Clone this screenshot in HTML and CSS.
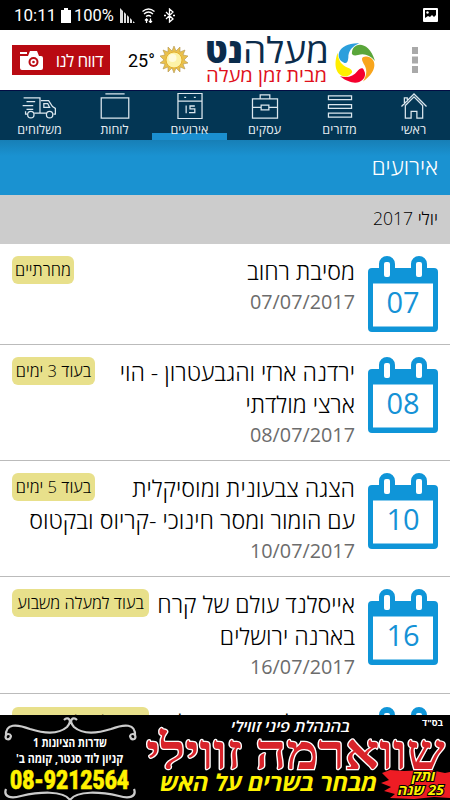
FILE: index.html
```html
<!DOCTYPE html>
<html lang="he" dir="rtl">
<head>
  <meta charset="UTF-8">
  <meta name="viewport" content="width=device-width, initial-scale=1.0">
  <title>מעלה נט</title>
  <link rel="stylesheet" href="styles.css">
</head>
<body>

  <svg class="defs" width="0" height="0">
    <symbol id="calendar" viewBox="0 0 70 76">
      <path d="M4 12h7V8a8 8 0 0 1 16 0v4h16V8a8 8 0 0 1 16 0v4h7a4 4 0 0 1 4 4v56a4 4 0 0 1-4 4H4a4 4 0 0 1-4-4V16a4 4 0 0 1 4-4z" fill="#0f95d8"/>
      <path d="M5 27.500h60v43H5z" fill="#fff"/>
      <rect x="16" y="6" width="6" height="15" rx="2" fill="#fff"/>
      <rect x="48" y="6" width="6" height="15" rx="2" fill="#fff"/>
    </symbol>
    <path id="arm" d="M-3-11C-2-21 14-23 20-2 15-8 9-10 3-8-1-7-4-8-3-11z"/>
  </svg>

  <div class="status" dir="ltr">
    <span class="clock">10:11</span>
    <svg class="battery" width="10" height="15" viewBox="0 0 10 15"><path d="M3 0h4v2h3v13H0V2h3z" fill="#fff"/></svg>
    <span class="percent">100%</span>
    <svg width="16" height="15" viewBox="0 0 16 15" fill="#ddd"><path d="M0 0l3 3v12H0zM4 4l2 2v9H4zM7 7l2 2v6H7zM10 10l2 2v3h-2zM13 13l2 2h-2z"/></svg>
    <svg class="wifi" width="13" height="15" viewBox="0 0 13 15" fill="none" stroke="#fff" stroke-width="1.300"><path d="M.5 3.500Q6.500-1.500 12.500 3.500M2 6q4.500-4 9 0M4 8.500q2.500-2 5 0"/><path d="M4.500 15v-4M3 12.500L4.500 11 6 12.500M8.500 10.500v4M7 13l1.500 1.500L10 13"/></svg>
    <svg class="bluetooth" width="11" height="15" viewBox="0 0 11 15" fill="none" stroke="#fff" stroke-width="1.300"><path d="M2 4l7 7-3.500 3V1L9 4l-7 7M0 7.500h2M9 7.500h2"/></svg>
    <svg class="picture" width="15" height="14" viewBox="0 0 15 14"><rect width="15" height="14" rx="1" fill="#fff"/><path d="M2 2h11v5l-2 2-2-2-2 2-2-1-3 2z" fill="#000"/><circle cx="4.500" cy="4.500" r="1.200" fill="#fff"/></svg>
  </div>

  <header class="top" dir="ltr">
    <a class="report">
      <svg width="23" height="19" viewBox="0 0 23 19"><path d="M0 1h7v2H0zM1 5h7l2-5h7l2 5h2q2 0 2 2v10q0 2-2 2H2q-2 0-2-2V5z" fill="#fff"/><circle cx="13.500" cy="11" r="5" fill="#b90a12"/><circle cx="13.500" cy="11" r="3" fill="#fff"/><circle cx="13.500" cy="11" r="1.300" fill="#b90a12"/></svg>
      <span>דווח לנו</span>
    </a>
    <span class="temp">25°</span>
    <svg class="sun" width="28" height="28" viewBox="0 0 28 28">
      <path d="M14 0l2 5 4-4v5l5-2-2 5 5 1-4 4 4 3-5 1 2 5-5-2v5l-4-4-2 5-2-5-4 4v-5l-5 2 2-5-5-1 4-3-4-4 5-1-2-5 5 2V1l4 4z" fill="#e9c04c" stroke="#b29552" stroke-width=".6"/>
      <circle cx="14" cy="14" r="8" fill="#fdf3a8" stroke="#e4b02f"/>
      <circle cx="12.500" cy="12" r="4" fill="#fffbdc"/>
    </svg>
    <svg class="logo" width="175" height="56" viewBox="0 0 175 56">
      <text class="logo-bold" x="3" y="31" textLength="38" lengthAdjust="spacingAndGlyphs">נט</text>
      <text class="logo-light" x="41" y="31" textLength="86" lengthAdjust="spacingAndGlyphs">מעלה</text>
      <text class="logo-sub" x="4" y="49.500" textLength="121" lengthAdjust="spacingAndGlyphs">מבית זמן מעלה</text>
      <g transform="translate(153 31)">
        <use href="#arm" fill="#5aa63a"/>
        <use href="#arm" fill="#f8a51c" transform="rotate(72)"/>
        <use href="#arm" fill="#f5002d" transform="rotate(144)"/>
        <use href="#arm" fill="#ffee00" transform="rotate(216)"/>
        <use href="#arm" fill="#2b9fdc" transform="rotate(288)"/>
      </g>
    </svg>
    <svg class="more" width="6" height="26" viewBox="0 0 6 26"><path d="M0 0h6v7H0zM0 9.500h6v7H0zM0 19h6v7H0z" fill="#a9a9a9"/></svg>
  </header>

  <nav class="tabs">
    <a class="tab">
      <svg width="28" height="27" viewBox="0 0 28 27"><path d="M1 14L14 1l13 13M4 12V5h3v4M5 13l9-9 9 9v13h-6v-7h-6v7H5z"/></svg>
      <span>ראשי</span>
    </a>
    <a class="tab">
      <svg width="26" height="27" viewBox="0 0 26 27"><path d="M1 3h24v4H1zM1 12h24v4H1zM1 21h24v4H1z"/></svg>
      <span>מדורים</span>
    </a>
    <a class="tab">
      <svg width="28" height="27" viewBox="0 0 28 27"><path d="M1 6h26v20H1zM9 6V2h10v4M1 15h9M18 15h9M10 12.500h8v5h-8z"/></svg>
      <span>עסקים</span>
    </a>
    <a class="tab active">
      <svg width="26" height="27" viewBox="0 0 26 27"><path d="M.5.500h25v26H.5zM.5 8.500h25"/><path d="M7 4.500h2M17 4.500h2"/><path d="M9 13v8M18 13.500h-5v3h5v4h-6"/></svg>
      <span>אירועים</span>
    </a>
    <a class="tab">
      <svg width="30" height="27" viewBox="0 0 30 27"><path d="M5 1h20M.7 5h28.600v21H.7z"/></svg>
      <span>לוחות</span>
    </a>
    <a class="tab">
      <svg width="35" height="27" viewBox="0 0 35 27"><path d="M1 5h17v16h-6M4 9h9M0 13h11M4 17h7M19 8h8l4 6 3 2v6h-2M3 19v3h2M18 21h7M22 11h4l2 4h-6z"/><circle cx="8.500" cy="22.500" r="3.300"/><circle cx="28" cy="22.500" r="3.300"/></svg>
      <span>משלוחים</span>
    </a>
  </nav>

  <h1 class="page-title">אירועים</h1>
  <h2 class="month">יולי 2017</h2>

  <ul class="events">
    <li class="event">
      <div class="cal"><svg><use href="#calendar"/></svg><b>07</b></div>
      <div class="info">
        <span class="badge w1">מחרתיים</span>
        <p class="title">מסיבת רחוב</p>
        <p class="date">07/07/2017</p>
      </div>
    </li>
    <li class="event">
      <div class="cal"><svg><use href="#calendar"/></svg><b>08</b></div>
      <div class="info">
        <span class="badge w2">בעוד 3 ימים</span>
        <p class="title">ירדנה ארזי והגבעטרון - הוי<br>ארצי מולדתי</p>
        <p class="date">08/07/2017</p>
      </div>
    </li>
    <li class="event">
      <div class="cal"><svg><use href="#calendar"/></svg><b>10</b></div>
      <div class="info">
        <span class="badge w2">בעוד 5 ימים</span>
        <p class="title">הצגה צבעונית ומוסיקלית<br>עם הומור ומסר חינוכי -קריוס ובקטוס</p>
        <p class="date">10/07/2017</p>
      </div>
    </li>
    <li class="event">
      <div class="cal"><svg><use href="#calendar"/></svg><b>16</b></div>
      <div class="info">
        <span class="badge w3">בעוד למעלה משבוע</span>
        <p class="title">אייסלנד עולם של קרח<br>בארנה ירושלים</p>
        <p class="date">16/07/2017</p>
      </div>
    </li>
    <li class="event last">
      <div class="cal"><svg><use href="#calendar"/></svg></div>
      <div class="info">
        <span class="badge w3">בעוד למעלה משבוע</span>
        <p class="title">פסטיבל הקיץ הגדול</p>
      </div>
    </li>
  </ul>

  <footer class="ad">
    <svg width="450" height="85" viewBox="0 0 450 85">
      <g fill="none" stroke="#ccc" stroke-width="2.200">
        <path d="M6 20c-2 5 4 6 5 1-1-3-4-2-5-1zM6 21C5 8 17 9 30 14c16 5 29 5 37-2 6-7 1-11-3-7M135 20c2 5-4 6-5 1 1-3 4-2 5-1zM135 21c1-13-11-12-24-7-16 5-29 5-37-2-6-7-1-11 3-7"/>
        <path d="M6 74c-3 8 5 10 15 7 18-4 42-6 49 4 7-10 31-8 49-4 10 3 18 1 15-7"/>
      </g>
      <text class="ad-addr" x="33" y="32" textLength="74" lengthAdjust="spacingAndGlyphs">שדרות הציונות 1</text>
      <text class="ad-addr" x="16" y="48" textLength="107" lengthAdjust="spacingAndGlyphs">קניון לוד סנטר, קומה ב'</text>
      <text class="ad-phone" x="10" y="74" textLength="119" lengthAdjust="spacingAndGlyphs">08-9212564</text>
      <text class="ad-owner" x="231" y="17" textLength="119" lengthAdjust="spacingAndGlyphs">בהנהלת פיני זווילי</text>
      <text class="ad-tiny" x="422" y="11" textLength="21" lengthAdjust="spacingAndGlyphs">בס"ד</text>
      <text class="ad-name" x="146" y="54" textLength="299" lengthAdjust="spacingAndGlyphs">שווארמה זווילי</text>
      <path d="M382 58l8-3 14 1 26-1 15 3 5-1v26l-16-1-20 2-24-1 5-4-11-3 7-4-10-4 8-3z" fill="#ee1c24"/>
      <text class="ad-menu" x="160" y="76" textLength="217" lengthAdjust="spacingAndGlyphs">מבחר בשרים על האש</text>
      <text class="ad-years" x="412" y="66" textLength="23" lengthAdjust="spacingAndGlyphs">ותק</text>
      <text class="ad-years" x="398" y="80" textLength="46" lengthAdjust="spacingAndGlyphs">25 שנה</text>
    </svg>
  </footer>

</body>
</html>
```
FILE: styles.css
```css
* {
  box-sizing: border-box;
}

body {
  margin: 0;
  height: 800px;
  width: 450px;
  display: flex;
  flex-direction: column;
  overflow: hidden;
  background: #fff;
  color: #000;
  font-family: "Open Sans", "DejaVu Sans", sans-serif;
  font-weight: 350;
}

.defs {
  display: block;
  flex: none;
  height: 0;
}

/* Status bar */
.status {
  flex: none;
  height: 30px;
  display: flex;
  align-items: center;
  padding: 0 12px 0 14px;
  background: #000;
  color: #fff;
  font-family: Roboto, sans-serif;
  font-weight: 400;
  font-size: 17px;
}

.clock {
  width: 47px;
}

.percent {
  width: 42px;
  margin-left: 3px;
  margin-right: 4px;
  font-size: 16.5px;
}

.wifi {
  margin-left: 6px;
}

.bluetooth {
  margin-left: 9px;
}

.picture {
  margin-left: auto;
}

/* Header */
.top {
  flex: none;
  height: 60px;
  display: flex;
  align-items: center;
  padding: 0 32px 0 12px;
}

.report {
  width: 98px;
  height: 30px;
  display: flex;
  align-items: center;
  justify-content: space-between;
  padding: 0 7px 0 8px;
  background: #b90a12;
  color: #fff;
  font-size: 17px;
  font-weight: 500;
  letter-spacing: -0.6px;
  white-space: nowrap;
}

.temp {
  width: 32px;
  margin-left: 18px;
  font-family: Roboto, sans-serif;
  font-weight: 400;
  font-size: 18px;
}

.logo {
  margin: 0 0 1px 14px;
}

.logo text {
  direction: ltr;
}

.logo-bold {
  font-size: 35px;
  font-weight: 800;
  fill: #0b2c4c;
}

.logo-light {
  font-size: 35px;
  font-weight: 500;
  fill: #0b2c4c;
}

.logo-sub {
  font-size: 19px;
  font-weight: 400;
  fill: #e0101c;
}

.more {
  margin-left: auto;
}

/* Tabs */
.tabs {
  flex: none;
  height: 50px;
  display: flex;
  background: #033654;
  border-top: 1px solid #020c44;
}

.tab {
  flex: none;
  width: 75px;
  display: flex;
  flex-direction: column;
  align-items: center;
  padding-top: 2px;
  color: #e6edf2;
  font-size: 12.5px;
  font-weight: 400;
  line-height: 21px;
}

.tab:first-child {
  width: 73px;
}

.tab svg {
  fill: none;
  stroke: #dce7ee;
  stroke-width: 1.3;
}

.tab.active {
  background: linear-gradient(#033654 42px, #1a8fd0 42px);
}

/* Headings */
.page-title {
  flex: none;
  height: 55px;
  margin: 0;
  padding-right: 12px;
  background: linear-gradient(#177fb6, #1a92d1 16px);
  color: #fff;
  font-size: 22.5px;
  font-weight: 350;
  line-height: 53px;
}

.month {
  flex: none;
  height: 49px;
  margin: 0;
  padding-right: 12px;
  background: #ccc;
  font-size: 17.6px;
  font-weight: 350;
  line-height: 47px;
}

/* Events list */
.events {
  flex: 1;
  min-height: 0;
  margin: 0;
  padding: 0;
  list-style: none;
  overflow: hidden;
}

.event {
  display: flex;
  padding: 11.6px 12px 12.7px;
  border-bottom: 1px solid #bbb;
}

.event.last {
  padding-top: 13px;
}

.cal {
  flex: none;
  display: grid;
  width: 70px;
  height: 76px;
  margin-left: 13px;
}

.cal svg,
.cal b {
  grid-area: 1 / 1;
  width: 70px;
  height: 76px;
}

.cal b {
  padding-top: 8px;
  color: #1592d6;
  font-size: 29px;
  font-weight: 400;
  line-height: 76px;
  text-align: center;
}

.info {
  flex: 1;
}

.badge {
  float: left;
  height: 28px;
  border-radius: 6px;
  background: #e8e08b;
  font-size: 16.5px;
  line-height: 28px;
  text-align: center;
  white-space: nowrap;
}

.w1 {
  width: 62px;
}

.w2 {
  width: 83px;
}

.w3 {
  width: 137px;
}

.title,
.date {
  margin: 0;
  white-space: nowrap;
}

.title {
  font-size: 23.2px;
  line-height: 31.9px;
}

.date {
  color: #6c6c6c;
  font-size: 19.8px;
  font-weight: 400;
  line-height: 27px;
}

/* Bottom banner */
.ad {
  flex: none;
  height: 85px;
  background: #000;
}

.ad svg {
  display: block;
}

.ad text {
  direction: rtl;
  text-anchor: end;
}

.ad-addr {
  fill: #fff;
  font-size: 13px;
  font-weight: 700;
}

.ad-phone {
  fill: #fff200;
  stroke: #fff200;
  stroke-width: 0.6px;
  font-family: Roboto, sans-serif;
  font-size: 26px;
  font-weight: 900;
}

.ad-owner {
  fill: #fff;
  font-size: 15px;
  font-style: italic;
  font-weight: 600;
}

.ad-tiny {
  fill: #fff;
  font-size: 9px;
  font-weight: 700;
}

.ad-name {
  fill: #d8232a;
  stroke: #fff;
  stroke-width: 2.5px;
  paint-order: stroke;
  font-family: "Liberation Serif", serif;
  font-size: 49px;
  font-weight: 700;
}

.ad-menu {
  fill: #fff200;
  font-size: 23px;
  font-style: italic;
  font-weight: 700;
}

.ad-years {
  fill: #fff200;
  stroke: #000;
  stroke-width: 2px;
  paint-order: stroke;
  font-size: 14px;
  font-style: italic;
  font-weight: 700;
}
```
